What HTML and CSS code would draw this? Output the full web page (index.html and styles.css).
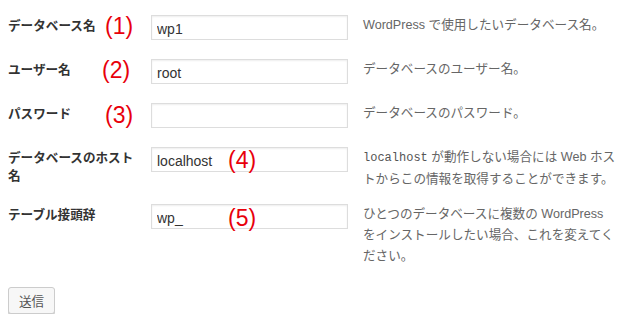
FILE: index.html
```html
<!DOCTYPE html>
<html lang="ja">

<head>
    <meta charset="UTF-8">
    <meta name="viewport" content="width=device-width, initial-scale=1.0">
    <title>データベース設定</title>
    <link rel="stylesheet" href="styles.css">
</head>

<body>
    <form class="setup" onsubmit="return false;">
        <table class="form-table">
            <tr>
                <th><label for="dbname">データベース名</label><span class="mark mark-label">(1)</span></th>
                <td class="field"><input id="dbname" type="text" value="wp1"></td>
                <td class="desc">WordPress で使用したいデータベース名。</td>
            </tr>
            <tr>
                <th><label for="uname">ユーザー名</label><span class="mark mark-label mark-2">(2)</span></th>
                <td class="field"><input id="uname" type="text" value="root"></td>
                <td class="desc">データベースのユーザー名。</td>
            </tr>
            <tr>
                <th><label for="pwd">パスワード</label><span class="mark mark-label mark-3">(3)</span></th>
                <td class="field"><input id="pwd" type="text" value=""></td>
                <td class="desc">データベースのパスワード。</td>
            </tr>
            <tr>
                <th><label for="dbhost">データベースのホスト名</label></th>
                <td class="field"><input id="dbhost" type="text" value="localhost"><span class="mark mark-field">(4)</span></td>
                <td class="desc"><code>localhost</code> が動作しない場合には Web ホストからこの情報を取得することができます。</td>
            </tr>
            <tr>
                <th><label for="prefix">テーブル接頭辞</label></th>
                <td class="field"><input id="prefix" type="text" value="wp_"><span class="mark mark-field mark-5">(5)</span></td>
                <td class="desc">ひとつのデータベースに複数の WordPress をインストールしたい場合、これを変えてください。</td>
            </tr>
        </table>
        <p class="step"><button type="submit" class="button">送信</button></p>
    </form>
</body>

</html>
```

FILE: styles.css
```css
body {
    margin: 8px;
    background: #fff;
    font-family: "Liberation Sans", "Noto Sans CJK JP", sans-serif;
    font-size: 12.6px;
    color: #444;
}

.form-table {
    border-collapse: collapse;
    border-spacing: 0;
}

.form-table th {
    position: relative;
    width: 133px;
    padding: 9px 10px 0 0;
    vertical-align: top;
    text-align: left;
    line-height: 18px;
    font-weight: bold;
    color: #333;
}

.form-table td {
    vertical-align: top;
}

.field {
    position: relative;
    width: 197px;
    padding: 7px 0 12px;
}

.field input {
    display: block;
    box-sizing: border-box;
    width: 197px;
    height: 25px;
    margin: 0;
    padding: 2px 5px 0;
    border: 1px solid #ddd;
    box-shadow: inset 0 1px 2px rgba(0, 0, 0, 0.07);
    background: #fff;
    font-family: "Liberation Sans", "Noto Sans CJK JP", sans-serif;
    font-size: 14px;
    color: #333;
    outline: none;
}

.desc {
    width: 256px;
    padding: 7px 0 7px 15px;
    line-height: 21px;
    color: #666;
}

.desc code {
    font-family: "Liberation Mono", "DejaVu Sans Mono", monospace;
    font-size: 12px;
    color: #555;
}

.mark {
    position: absolute;
    font-family: "Liberation Sans", sans-serif;
    font-size: 23px;
    font-weight: normal;
    line-height: 26px;
    color: #e8000b;
    pointer-events: none;
}

.mark-label {
    top: 5px;
    left: 97px;
}

.mark-2 {
    top: 5px;
    left: 94px;
}

.mark-3 {
    top: 6px;
    left: 97px;
}

.mark-field {
    top: 7px;
    left: 77px;
}

.mark-5 {
    top: 8px;
}

.step {
    margin: 13px 0 0;
}

.button {
    box-sizing: border-box;
    height: 27px;
    padding: 0 10px;
    border: 1px solid #ccc;
    border-radius: 3px;
    background: #f7f7f7;
    box-shadow: 0 1px 0 #ccc;
    font-family: "Noto Sans CJK JP", sans-serif;
    font-size: 12.6px;
    color: #555;
    cursor: pointer;
}
```
